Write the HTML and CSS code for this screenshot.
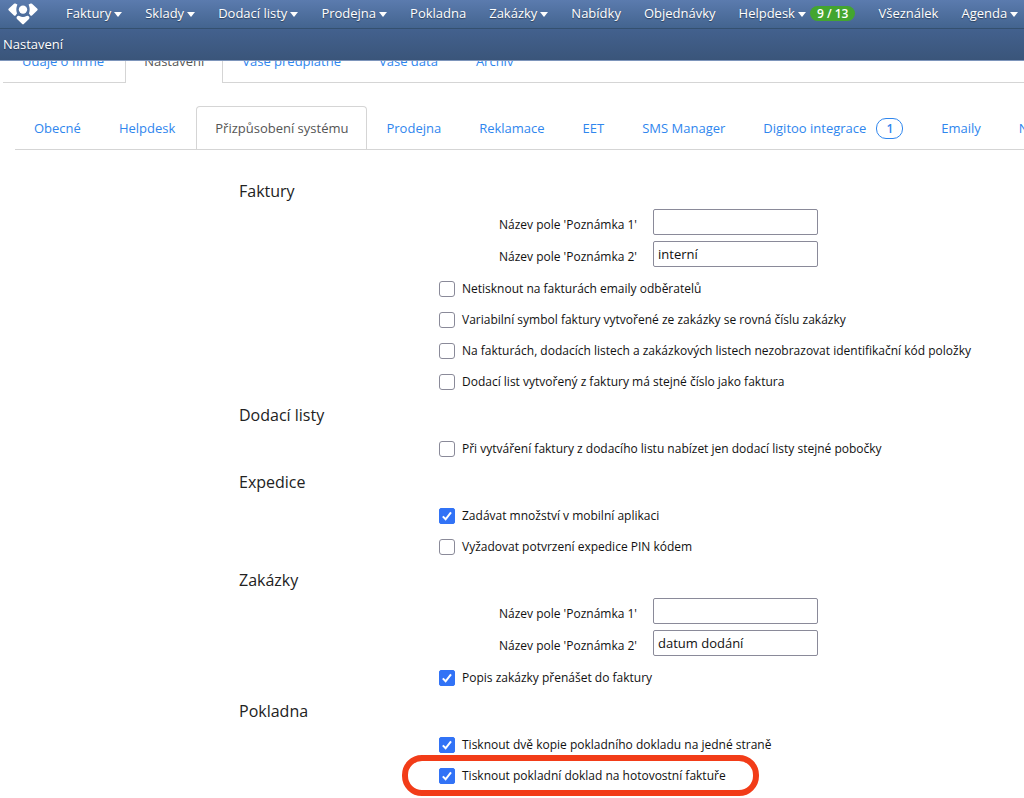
FILE: index.html
```html
<!DOCTYPE html>
<html lang="cs">
<head>
  <meta charset="UTF-8">
  <meta name="viewport" content="width=device-width, initial-scale=1.0">
  <title>Nastavení</title>
  <link rel="stylesheet" href="styles.css">
</head>
<body>
  <header class="header">
    <nav class="navbar">
      <a class="logo" href="#" aria-label="Domů">
        <svg width="30" height="22" viewBox="0 0 30 22" fill="#fff">
          <circle cx="15" cy="6.6" r="4.2"/>
          <path d="M6 0.8 Q6.6 0.2 7.4 0.6 L9.4 1.6 Q7.4 6.5 9 10.6 L7.6 12.4 Q6.8 13.2 6 12.4 L0.6 7.2 Q0 6.4 0.6 5.8 Z"/>
          <path d="M24 0.8 Q23.4 0.2 22.6 0.6 L20.6 1.6 Q22.6 6.5 21 10.6 L22.4 12.4 Q23.2 13.2 24 12.4 L29.4 7.2 Q30 6.4 29.4 5.8 Z"/>
          <path d="M8.8 13.8 Q10 12.3 11.4 13.1 Q15 15 18.6 13.1 Q20 12.3 21.2 13.8 Q21.9 15 21 16 L15.8 21 Q15 21.8 14.2 21 L9 16 Q8.1 15 8.8 13.8 Z"/>
        </svg>
      </a>
      <a class="nav-link dropdown" href="#">Faktury</a>
      <a class="nav-link dropdown" href="#">Sklady</a>
      <a class="nav-link dropdown" href="#">Dodací listy</a>
      <a class="nav-link dropdown" href="#">Prodejna</a>
      <a class="nav-link" href="#">Pokladna</a>
      <a class="nav-link dropdown" href="#">Zakázky</a>
      <a class="nav-link" href="#">Nabídky</a>
      <a class="nav-link" href="#">Objednávky</a>
      <div class="nav-group">
        <a class="nav-link dropdown" href="#">Helpdesk</a>
        <a class="badge" href="#">9 / 13</a>
      </div>
      <a class="nav-link" href="#">Všeználek</a>
      <a class="nav-link dropdown" href="#">Agenda</a>
    </nav>
    <div class="subbar"><a class="nav-link" href="#">Nastavení</a></div>
  </header>

  <main class="page">
    <nav class="tabs">
      <a class="tab" href="#">Údaje o firmě</a>
      <a class="tab active" href="#">Nastavení</a>
      <a class="tab" href="#">Vaše předplatné</a>
      <a class="tab" href="#">Vaše data</a>
      <a class="tab" href="#">Archiv</a>
    </nav>

    <nav class="tabs tabs-inner">
      <a class="tab" href="#">Obecné</a>
      <a class="tab" href="#">Helpdesk</a>
      <a class="tab active" href="#">Přizpůsobení systému</a>
      <a class="tab" href="#">Prodejna</a>
      <a class="tab" href="#">Reklamace</a>
      <a class="tab" href="#">EET</a>
      <a class="tab" href="#">SMS Manager</a>
      <a class="tab" href="#">Digitoo integrace <span class="count">1</span></a>
      <a class="tab" href="#">Emaily</a>
      <a class="tab" href="#">N</a>
    </nav>

    <form class="settings">
      <section>
        <h2>Faktury</h2>
        <div class="field">
          <label for="fak1">Název pole 'Poznámka 1'</label>
          <input type="text" id="fak1">
        </div>
        <div class="field">
          <label for="fak2">Název pole 'Poznámka 2'</label>
          <input type="text" id="fak2" value="interní">
        </div>
        <div class="check"><label><input type="checkbox"> Netisknout na fakturách emaily odběratelů</label></div>
        <div class="check"><label><input type="checkbox"> Variabilní symbol faktury vytvořené ze zakázky se rovná číslu zakázky</label></div>
        <div class="check"><label><input type="checkbox"> Na fakturách, dodacích listech a zakázkových listech nezobrazovat identifikační kód položky</label></div>
        <div class="check"><label><input type="checkbox"> Dodací list vytvořený z faktury má stejné číslo jako faktura</label></div>
      </section>

      <section>
        <h2>Dodací listy</h2>
        <div class="check"><label><input type="checkbox"> Při vytváření faktury z dodacího listu nabízet jen dodací listy stejné pobočky</label></div>
      </section>

      <section>
        <h2>Expedice</h2>
        <div class="check"><label><input type="checkbox" checked> Zadávat množství v mobilní aplikaci</label></div>
        <div class="check"><label><input type="checkbox"> Vyžadovat potvrzení expedice PIN kódem</label></div>
      </section>

      <section>
        <h2>Zakázky</h2>
        <div class="field">
          <label for="zak1">Název pole 'Poznámka 1'</label>
          <input type="text" id="zak1">
        </div>
        <div class="field">
          <label for="zak2">Název pole 'Poznámka 2'</label>
          <input type="text" id="zak2" value="datum dodání">
        </div>
        <div class="check"><label><input type="checkbox" checked> Popis zakázky přenášet do faktury</label></div>
      </section>

      <section>
        <h2>Pokladna</h2>
        <div class="check"><label><input type="checkbox" checked> Tisknout dvě kopie pokladního dokladu na jedné straně</label></div>
        <div class="check"><label class="highlight"><input type="checkbox" checked> Tisknout pokladní doklad na hotovostní faktuře</label></div>
      </section>
    </form>
  </main>
</body>
</html>
```
FILE: styles.css
```css
* {
    box-sizing: border-box;
}

body {
    margin: 0;
    font-family: "Open Sans", "Noto Sans", sans-serif;
    font-size: 12px;
    color: #111;
    background: #fff;
}

a {
    text-decoration: none;
}

/* header */
.header {
    position: fixed;
    top: 0;
    left: 0;
    right: 0;
    z-index: 10;
    border-bottom: 1px solid #7d95bb;
}

.navbar {
    display: flex;
    align-items: center;
    gap: 23px;
    height: 29px;
    padding: 0 8px 2px;
    background: linear-gradient(#5b7bae, #43648f);
    border-bottom: 1px solid #34506f;
    white-space: nowrap;
}

.logo {
    display: flex;
    margin-right: 5px;
    padding-top: 2px;
}

.nav-link {
    font-size: 13px;
    line-height: 18px;
    color: #fff;
    text-shadow: 0 1px 1px rgba(0, 0, 0, 0.4);
}

.dropdown::after {
    content: "";
    display: inline-block;
    margin-left: 3px;
    vertical-align: 1px;
    border: 4px solid transparent;
    border-top: 5px solid #fff;
    border-bottom: 0;
}

.nav-group {
    display: flex;
    align-items: center;
    gap: 4px;
}

.badge {
    padding: 0 7px;
    border-radius: 8px;
    background: #43a52f;
    color: #fff;
    font-size: 12px;
    font-weight: 600;
    line-height: 15px;
}

.subbar {
    display: flex;
    align-items: center;
    height: 31px;
    padding: 0 3px 2px;
    background: linear-gradient(#43618e, #3a557a);
}

/* tabs */
.page {
    padding-top: 39px;
}

.tabs {
    display: flex;
    height: 44px;
    margin-left: 3px;
    border-bottom: 1px solid #d5d5d5;
    white-space: nowrap;
}

.tabs-inner {
    margin: 23px 0 0 15px;
    overflow: hidden;
}

.tab {
    display: flex;
    align-items: center;
    flex-shrink: 0;
    height: 44px;
    padding: 0 18px 1px;
    border: 1px solid transparent;
    border-bottom: 0;
    border-radius: 4px 4px 0 0;
    font-size: 13px;
    color: #2f86ee;
}

.tab.active {
    margin-left: 2px;
    background: #fff;
    border-color: #d5d5d5;
    color: #555;
}

.count {
    margin-left: 10px;
    padding: 0 9px;
    border: 1px solid #2f86ee;
    border-radius: 10px;
    font-size: 12px;
    font-weight: 600;
    line-height: 19px;
}

/* settings form */
.settings {
    padding: 20px 16px 10px 239px;
}

h2 {
    height: 36px;
    margin: 0;
    padding-top: 10px;
    font-size: 16px;
    font-weight: 400;
    line-height: 22px;
    color: #222;
}

.field {
    display: grid;
    grid-template-columns: 398px 165px;
    gap: 16px;
    padding: 3px 0;
}

.field label {
    padding-top: 8px;
    line-height: 16px;
    text-align: right;
}

.field input {
    height: 26px;
    padding: 0 4px;
    border: 1px solid #8a8a99;
    border-radius: 2px;
    background: #fff;
    font: inherit;
    font-size: 13px;
    color: #111;
}

.check {
    display: flex;
    padding: 11px 0 4px 200px;
}

.check label {
    display: flex;
    align-items: center;
    gap: 7px;
    line-height: 16px;
}

.check input {
    appearance: none;
    flex-shrink: 0;
    width: 16px;
    height: 16px;
    margin: 0;
    border: 1px solid #8a8a99;
    border-radius: 3px;
    background: #fff;
}

.check input:checked {
    border-color: #3273f6;
    border-radius: 2px;
    background: #3273f6 url("data:image/svg+xml,%3Csvg xmlns='http://www.w3.org/2000/svg' viewBox='0 0 14 14'%3E%3Cpath d='M2.8 7.4l2.8 2.9 5.4-7' fill='none' stroke='white' stroke-width='2'/%3E%3C/svg%3E") center / 14px no-repeat;
}

/* red frame around the option */
.highlight {
    position: relative;
}

.highlight::after {
    content: "";
    position: absolute;
    top: -13px;
    right: -33px;
    bottom: -12px;
    left: -37px;
    border: 6px solid #f23c18;
    border-radius: 20px;
    pointer-events: none;
}
```
